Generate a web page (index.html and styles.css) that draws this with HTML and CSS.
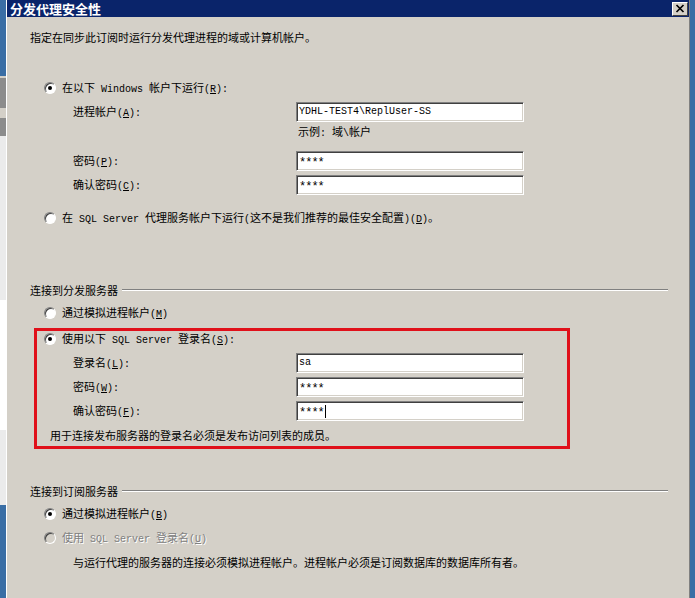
FILE: index.html
```html
<!DOCTYPE html>
<html lang="zh-CN">
<head>
    <meta charset="UTF-8">
    <title>分发代理安全性</title>
    <link rel="stylesheet" href="styles.css">
</head>
<body>
    <div class="desk-left">
        <div class="blue h76"></div>
        <div class="face h2"></div>
        <div class="dark h30"></div>
        <div class="face h10"></div>
        <div class="dark h18"></div>
        <div class="pale h164"></div>
        <div class="white h130"></div>
        <div class="pale h75"></div>
        <div class="blue grow"></div>
    </div>

    <div class="dialog">
        <div class="titlebar">
            <span>分发代理安全性</span>
            <span class="close">
                <svg width="10" height="9" viewBox="0 0 10 9"><path d="M1.5 1 L8.5 8 M8.5 1 L1.5 8" stroke="#000" stroke-width="1.7"/></svg>
            </span>
        </div>

        <div class="content">
            <div class="line">指定在同步此订阅时运行分发代理进程的域或计算机帐户。</div>

            <div class="opt mt35"><span class="radio on"></span><span>在以下<span class="a"> Windows </span>帐户下运行<span class="a">(<u>R</u>):</span></span></div>
            <div class="field mt6">
                <span class="label">进程帐户<span class="a">(<u>A</u>):</span></span>
                <div class="input">YDHL-TEST4\ReplUser-SS</div>
            </div>
            <div class="line hint mt1">示例<span class="a">: </span>域<span class="a">\</span>帐户</div>
            <div class="field mt12">
                <span class="label">密码<span class="a">(<u>P</u>):</span></span>
                <div class="input"><span class="stars">****</span></div>
            </div>
            <div class="field mt4">
                <span class="label">确认密码<span class="a">(<u>C</u>):</span></span>
                <div class="input"><span class="stars">****</span></div>
            </div>
            <div class="opt mt15"><span class="radio"></span><span>在<span class="a"> SQL Server </span>代理服务帐户下运行<span class="a">(</span>这不是我们推荐的最佳安全配置<span class="a">)(<u>D</u>)</span>。</span></div>

            <div class="group mt56">连接到分发服务器</div>
            <div class="opt mt7"><span class="radio"></span><span>通过模拟进程帐户<span class="a">(<u>M</u>)</span></span></div>

            <div class="marked mt7">
                <div class="opt"><span class="radio on"></span><span>使用以下<span class="a"> SQL Server </span>登录名<span class="a">(<u>S</u>):</span></span></div>
                <div class="field mt6">
                    <span class="label">登录名<span class="a">(<u>L</u>):</span></span>
                    <div class="input">sa</div>
                </div>
                <div class="field mt4">
                    <span class="label">密码<span class="a">(<u>W</u>):</span></span>
                    <div class="input"><span class="stars">****</span></div>
                </div>
                <div class="field mt4">
                    <span class="label">确认密码<span class="a">(<u>F</u>):</span></span>
                    <div class="input"><span class="stars">****</span><span class="caret"></span></div>
                </div>
                <div class="line note mt6">用于连接发布服务器的登录名必须是发布访问列表的成员。</div>
            </div>

            <div class="group mt34">连接到订阅服务器</div>
            <div class="opt mt7"><span class="radio on"></span><span>通过模拟进程帐户<span class="a">(<u>B</u>)</span></span></div>
            <div class="opt disabled mt8"><span class="radio off"></span><span>使用<span class="a"> SQL Server </span>登录名<span class="a">(<u>U</u>)</span></span></div>
            <div class="line note2 mt8">与运行代理的服务器的连接必须模拟进程帐户。进程帐户必须是订阅数据库的数据库所有者。</div>
        </div>
    </div>

    <div class="desk-right"></div>
</body>
</html>
```

FILE: styles.css
```css
* {
    box-sizing: border-box;
}
body {
    margin: 0;
    width: 695px;
    height: 598px;
    overflow: hidden;
    display: flex;
    background-color: #3a6ea5;
    font-family: "Noto Sans CJK SC", sans-serif;
    font-size: 11px;
    line-height: 16px;
    color: #000;
}

/* bits of the windows behind the dialog */
.desk-left {
    width: 6px;
    display: flex;
    flex-direction: column;
}
.blue { background-color: #3a6ea5; }
.face { background-color: #d4d0c8; }
.dark { background-color: #8c8c8c; }
.pale { background-color: #ebebeb; }
.white { background-color: #fff; }
.h2 { height: 2px; }
.h10 { height: 10px; }
.h18 { height: 18px; }
.h30 { height: 30px; }
.h75 { height: 75px; }
.h76 { height: 76px; }
.h130 { height: 130px; }
.h164 { height: 164px; }
.grow { flex: 1; }
.desk-right {
    width: 5px;
    background-color: #3a6ea5;
}

.dialog {
    width: 684px;
    background-color: #d4d0c8;
    border-left: 1px solid #fff;
    border-right: 1px solid #808080;
}
.titlebar {
    height: 17px;
    background-color: #0a246a;
    color: #fff;
    font-weight: bold;
    font-size: 13px;
    line-height: 17px;
    padding-left: 3px;
    padding-right: 1px;
    display: flex;
    align-items: center;
    justify-content: space-between;
}
.close {
    width: 16px;
    height: 14px;
    background-color: #d4d0c8;
    border-top: 1px solid #fff;
    border-left: 1px solid #fff;
    border-right: 1px solid #404040;
    border-bottom: 1px solid #404040;
    display: flex;
    align-items: center;
    justify-content: center;
}

.content {
    padding: 12px 21px 0 23px;
}
.a {
    font-family: "Liberation Mono", monospace;
    font-size: 10px;
}
.line {
    height: 16px;
    white-space: nowrap;
}
.hint { padding-left: 268px; }
.note { padding-left: 13px; }
.note2 { padding-left: 43px; }

.opt {
    height: 16px;
    display: flex;
    align-items: center;
    gap: 6px;
    padding-left: 14px;
    white-space: nowrap;
}
.radio {
    width: 12px;
    height: 12px;
    border-radius: 50%;
    background-color: #fff;
    border: 1px solid;
    border-color: #808080 #fff #fff #808080;
    box-shadow: inset 1px 1px 0 #404040;
    display: flex;
    align-items: center;
    justify-content: center;
}
.radio.on::after {
    content: "";
    width: 4px;
    height: 4px;
    border-radius: 50%;
    background-color: #000;
}
.radio.off {
    background-color: #d4d0c8;
}
.disabled {
    color: #808080;
    text-shadow: 1px 1px 0 #fff;
}

.field {
    height: 20px;
    display: flex;
    align-items: center;
    padding-left: 43px;
}
.label {
    width: 223px;
    white-space: nowrap;
}
.input {
    width: 228px;
    height: 20px;
    background-color: #fff;
    border-top: 1px solid #808080;
    border-left: 1px solid #808080;
    border-right: 1px solid #fff;
    border-bottom: 1px solid #fff;
    box-shadow: inset 1px 1px 0 #404040, inset -1px -1px 0 #d4d0c8;
    padding-left: 2px;
    font-family: "Liberation Mono", monospace;
    font-size: 10px;
    line-height: 18px;
    display: flex;
    align-items: center;
}
.stars {
    font-size: 12px;
    letter-spacing: -1px;
    margin-top: 4px;
}
.caret {
    width: 1px;
    height: 13px;
    margin-left: 1px;
    background-color: #000;
}

.group {
    height: 16px;
    display: flex;
    align-items: center;
    gap: 4px;
}
.group::after {
    content: "";
    flex: 1;
    border-top: 1px solid #808080;
    border-bottom: 1px solid #fff;
}

.marked {
    width: 536px;
    margin-left: 4px;
    border: 3px solid #e0101a;
    padding: 0 0 3px 7px;
}
.marked .field { padding-left: 29px; }
.marked .opt { padding-left: 0; }
.marked .note { padding-left: 6px; }

.mt1 { margin-top: 1px; }
.mt4 { margin-top: 4px; }
.mt6 { margin-top: 6px; }
.mt7 { margin-top: 7px; }
.mt8 { margin-top: 8px; }
.mt12 { margin-top: 12px; }
.mt15 { margin-top: 15px; }
.mt34 { margin-top: 34px; }
.mt35 { margin-top: 35px; }
.mt56 { margin-top: 56px; }
```
